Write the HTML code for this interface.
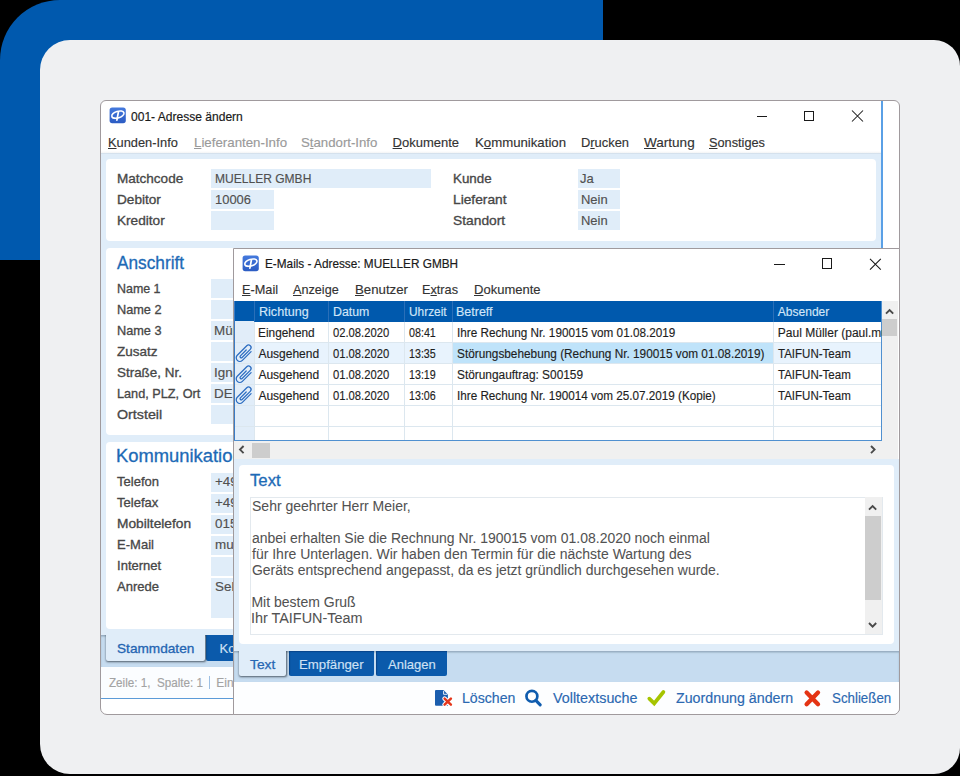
<!DOCTYPE html>
<html><head><meta charset="utf-8"><style>
html,body{margin:0;padding:0;}
body{width:960px;height:776px;overflow:hidden;position:relative;background:#000;font-family:'Liberation Sans', sans-serif;}
u{text-decoration:underline;text-decoration-thickness:1px;text-underline-offset:1px;}

</style></head><body>
<div style="position:absolute;left:0px;top:0px;width:603px;height:260px;background:#0059ae;border-top-left-radius:60px;"></div>
<div style="position:absolute;left:40px;top:40px;width:920px;height:734px;background:#eff0f2;border-radius:30px 26px 26px 30px;"></div>
<div style="position:absolute;left:100px;top:100px;width:800px;height:615px;background:#ffffff;box-sizing:border-box;border:1px solid #a09a9d;border-radius:6px 6px 7px 7px;"></div>
<svg style="position:absolute;left:109px;top:107px" width="17" height="17" viewBox="0 0 17 17">
<defs><linearGradient id="gi109" x1="0" y1="0" x2="0" y2="1"><stop offset="0" stop-color="#4479dd"/><stop offset="1" stop-color="#2c5cc3"/></linearGradient></defs>
<rect x="0.6" y="0.4" width="16.2" height="15.8" rx="2.6" fill="url(#gi109)"/>
<ellipse cx="8.9" cy="7.6" rx="6.3" ry="3.3" transform="rotate(-17 8.9 7.6)" fill="none" stroke="#fff" stroke-width="1.55"/>
<path d="M9.4 5.0 L7.9 13.2" stroke="#fff" stroke-width="1.7" fill="none" stroke-linecap="round"/>
<path d="M2.6 10.6 Q5 12 8.2 11.6" stroke="#fff" stroke-width="1" fill="none" opacity="0.8"/>
</svg>
<div class="tx" style="position:absolute;left:130.92px;top:109.81px;font-size:13.4px;line-height:13.4px;font-weight:normal;color:#1a1a1a;white-space:pre;transform-origin:0 0;transform:scaleX(0.8992);-webkit-text-stroke:0.2px #1a1a1a;">001- Adresse ändern</div>
<div style="position:absolute;left:756.5px;top:115.5px;width:10.5px;height:1px;background:#1a1a1a;"></div>
<div style="position:absolute;left:804px;top:110.5px;width:10px;height:10.5px;background:transparent;box-sizing:border-box;border:1px solid #1a1a1a;"></div>
<svg style="position:absolute;left:851px;top:110px" width="13" height="13" viewBox="0 0 13 13"><path d="M1 0.5 L12 11.5 M12 0.5 L1 11.5" stroke="#1a1a1a" stroke-width="1.05"/></svg>
<div class="tx" style="position:absolute;left:107.98px;top:135.65px;font-size:13px;line-height:13px;font-weight:normal;color:#333;white-space:pre;transform-origin:0 0;transform:scaleX(0.9860);-webkit-text-stroke:0.15px #333;"><u>K</u>unden-Info</div>
<div class="tx" style="position:absolute;left:193.70px;top:135.65px;font-size:13px;line-height:13px;font-weight:normal;color:#9a9a9a;white-space:pre;transform-origin:0 0;transform:scaleX(1.0220);-webkit-text-stroke:0.15px #9a9a9a;"><u>L</u>ieferanten-Info</div>
<div class="tx" style="position:absolute;left:300.68px;top:135.65px;font-size:13px;line-height:13px;font-weight:normal;color:#9a9a9a;white-space:pre;transform-origin:0 0;transform:scaleX(1.0162);-webkit-text-stroke:0.15px #9a9a9a;">S<u>t</u>andort-Info</div>
<div class="tx" style="position:absolute;left:392.59px;top:135.65px;font-size:13px;line-height:13px;font-weight:normal;color:#333;white-space:pre;transform-origin:0 0;-webkit-text-stroke:0.15px #333;"><u>D</u>okumente</div>
<div class="tx" style="position:absolute;left:475.09px;top:135.65px;font-size:13px;line-height:13px;font-weight:normal;color:#333;white-space:pre;transform-origin:0 0;transform:scaleX(1.0156);-webkit-text-stroke:0.15px #333;">K<u>o</u>mmunikation</div>
<div class="tx" style="position:absolute;left:581.09px;top:135.65px;font-size:13px;line-height:13px;font-weight:normal;color:#333;white-space:pre;transform-origin:0 0;transform:scaleX(0.9919);-webkit-text-stroke:0.15px #333;">D<u>r</u>ucken</div>
<div class="tx" style="position:absolute;left:643.99px;top:135.65px;font-size:13px;line-height:13px;font-weight:normal;color:#333;white-space:pre;transform-origin:0 0;transform:scaleX(1.0412);-webkit-text-stroke:0.15px #333;"><u>W</u>artung</div>
<div class="tx" style="position:absolute;left:708.98px;top:135.65px;font-size:13px;line-height:13px;font-weight:normal;color:#333;white-space:pre;transform-origin:0 0;transform:scaleX(0.9794);-webkit-text-stroke:0.15px #333;"><u>S</u>onstiges</div>
<div style="position:absolute;left:101px;top:153px;width:780px;height:482px;background:#e0edf9;"></div>
<div style="position:absolute;left:101px;top:151px;width:780px;height:2.5px;background:linear-gradient(rgba(255,255,255,0), rgba(150,160,170,0.18));"></div>
<div style="position:absolute;left:881px;top:101px;width:1.5px;height:613px;background:#5aa0e6;"></div>
<div style="position:absolute;left:106px;top:158.6px;width:770px;height:82.4px;background:#ffffff;border-radius:4px;"></div>
<div class="tx" style="position:absolute;left:117.09px;top:171.95px;font-size:13px;line-height:13px;font-weight:normal;color:#474747;white-space:pre;transform-origin:0 0;transform:scaleX(1.0406);-webkit-text-stroke:0.32px #474747;">Matchcode</div>
<div class="tx" style="position:absolute;left:117.09px;top:192.95px;font-size:13px;line-height:13px;font-weight:normal;color:#474747;white-space:pre;transform-origin:0 0;transform:scaleX(1.0466);-webkit-text-stroke:0.32px #474747;">Debitor</div>
<div class="tx" style="position:absolute;left:117.09px;top:213.95px;font-size:13px;line-height:13px;font-weight:normal;color:#474747;white-space:pre;transform-origin:0 0;transform:scaleX(1.0479);-webkit-text-stroke:0.32px #474747;">Kreditor</div>
<div style="position:absolute;left:211px;top:169px;width:220px;height:19px;background:#e0edf9;"></div>
<div style="position:absolute;left:211px;top:190px;width:63px;height:19px;background:#e0edf9;"></div>
<div style="position:absolute;left:211px;top:211px;width:63px;height:19px;background:#e0edf9;"></div>
<div class="tx" style="position:absolute;left:214.91px;top:171.95px;font-size:13px;line-height:13px;font-weight:normal;color:#505050;white-space:pre;transform-origin:0 0;transform:scaleX(0.9263);-webkit-text-stroke:0.15px #505050;">MUELLER GMBH</div>
<div class="tx" style="position:absolute;left:214.90px;top:192.95px;font-size:13px;line-height:13px;font-weight:normal;color:#505050;white-space:pre;transform-origin:0 0;transform:scaleX(0.9946);-webkit-text-stroke:0.15px #505050;">10006</div>
<div class="tx" style="position:absolute;left:452.57px;top:171.95px;font-size:13px;line-height:13px;font-weight:normal;color:#474747;white-space:pre;transform-origin:0 0;transform:scaleX(1.0272);-webkit-text-stroke:0.32px #474747;">Kunde</div>
<div style="position:absolute;left:577.5px;top:169px;width:42px;height:19px;background:#e0edf9;"></div>
<div class="tx" style="position:absolute;left:452.56px;top:192.95px;font-size:13px;line-height:13px;font-weight:normal;color:#474747;white-space:pre;transform-origin:0 0;transform:scaleX(1.0589);-webkit-text-stroke:0.32px #474747;">Lieferant</div>
<div style="position:absolute;left:577.5px;top:190px;width:42px;height:19px;background:#e0edf9;"></div>
<div class="tx" style="position:absolute;left:452.56px;top:213.95px;font-size:13px;line-height:13px;font-weight:normal;color:#474747;white-space:pre;transform-origin:0 0;transform:scaleX(1.0613);-webkit-text-stroke:0.32px #474747;">Standort</div>
<div style="position:absolute;left:577.5px;top:211px;width:42px;height:19px;background:#e0edf9;"></div>
<div class="tx" style="position:absolute;left:579.89px;top:171.95px;font-size:13px;line-height:13px;font-weight:normal;color:#505050;white-space:pre;transform-origin:0 0;-webkit-text-stroke:0.15px #505050;">Ja</div>
<div class="tx" style="position:absolute;left:580.99px;top:192.95px;font-size:13px;line-height:13px;font-weight:normal;color:#505050;white-space:pre;transform-origin:0 0;-webkit-text-stroke:0.15px #505050;">Nein</div>
<div class="tx" style="position:absolute;left:580.99px;top:213.95px;font-size:13px;line-height:13px;font-weight:normal;color:#505050;white-space:pre;transform-origin:0 0;-webkit-text-stroke:0.15px #505050;">Nein</div>
<div style="position:absolute;left:106px;top:248px;width:770px;height:187px;background:#ffffff;border-radius:4px;"></div>
<div class="tx" style="position:absolute;left:116.87px;top:255.12px;font-size:17.5px;line-height:17.5px;font-weight:normal;color:#1d6ab6;white-space:pre;transform-origin:0 0;transform:scaleX(0.9855);-webkit-text-stroke:0.3px #1d6ab6;">Anschrift</div>
<div class="tx" style="position:absolute;left:117.09px;top:281.95px;font-size:13px;line-height:13px;font-weight:normal;color:#474747;white-space:pre;transform-origin:0 0;transform:scaleX(0.9565);-webkit-text-stroke:0.32px #474747;">Name 1</div>
<div style="position:absolute;left:211px;top:279px;width:220px;height:19px;background:#e0edf9;"></div>
<div class="tx" style="position:absolute;left:117.09px;top:302.95px;font-size:13px;line-height:13px;font-weight:normal;color:#474747;white-space:pre;transform-origin:0 0;transform:scaleX(0.9784);-webkit-text-stroke:0.32px #474747;">Name 2</div>
<div style="position:absolute;left:211px;top:300px;width:220px;height:19px;background:#e0edf9;"></div>
<div class="tx" style="position:absolute;left:117.09px;top:323.95px;font-size:13px;line-height:13px;font-weight:normal;color:#474747;white-space:pre;transform-origin:0 0;transform:scaleX(0.9784);-webkit-text-stroke:0.32px #474747;">Name 3</div>
<div style="position:absolute;left:211px;top:321px;width:220px;height:19px;background:#e0edf9;"></div>
<div class="tx" style="position:absolute;left:117.09px;top:344.95px;font-size:13px;line-height:13px;font-weight:normal;color:#474747;white-space:pre;transform-origin:0 0;transform:scaleX(1.0359);-webkit-text-stroke:0.32px #474747;">Zusatz</div>
<div style="position:absolute;left:211px;top:342px;width:220px;height:19px;background:#e0edf9;"></div>
<div class="tx" style="position:absolute;left:117.09px;top:365.95px;font-size:13px;line-height:13px;font-weight:normal;color:#474747;white-space:pre;transform-origin:0 0;transform:scaleX(1.0323);-webkit-text-stroke:0.32px #474747;">Straße, Nr.</div>
<div style="position:absolute;left:211px;top:363px;width:220px;height:19px;background:#e0edf9;"></div>
<div class="tx" style="position:absolute;left:117.09px;top:386.95px;font-size:13px;line-height:13px;font-weight:normal;color:#474747;white-space:pre;transform-origin:0 0;transform:scaleX(0.9767);-webkit-text-stroke:0.32px #474747;">Land, PLZ, Ort</div>
<div style="position:absolute;left:211px;top:384px;width:220px;height:19px;background:#e0edf9;"></div>
<div class="tx" style="position:absolute;left:117.10px;top:407.95px;font-size:13px;line-height:13px;font-weight:normal;color:#474747;white-space:pre;transform-origin:0 0;transform:scaleX(1.0977);-webkit-text-stroke:0.32px #474747;">Ortsteil</div>
<div style="position:absolute;left:211px;top:405px;width:220px;height:19px;background:#e0edf9;"></div>
<div class="tx" style="position:absolute;left:213.59px;top:323.95px;font-size:13px;line-height:13px;font-weight:normal;color:#505050;white-space:pre;transform-origin:0 0;transform:scaleX(1.0300);-webkit-text-stroke:0.15px #505050;">Müller</div>
<div class="tx" style="position:absolute;left:213.59px;top:365.95px;font-size:13px;line-height:13px;font-weight:normal;color:#505050;white-space:pre;transform-origin:0 0;transform:scaleX(1.0300);-webkit-text-stroke:0.15px #505050;">Ignaz-Str. 1</div>
<div class="tx" style="position:absolute;left:213.59px;top:386.95px;font-size:13px;line-height:13px;font-weight:normal;color:#505050;white-space:pre;transform-origin:0 0;transform:scaleX(1.0300);-webkit-text-stroke:0.15px #505050;">DE</div>
<div style="position:absolute;left:106px;top:442px;width:770px;height:187px;background:#ffffff;border-radius:4px;"></div>
<div class="tx" style="position:absolute;left:116.28px;top:448.43px;font-size:17.5px;line-height:17.5px;font-weight:normal;color:#1d6ab6;white-space:pre;transform-origin:0 0;transform:scaleX(1.0500);-webkit-text-stroke:0.3px #1d6ab6;">Kommunikation</div>
<div class="tx" style="position:absolute;left:117.09px;top:474.95px;font-size:13px;line-height:13px;font-weight:normal;color:#474747;white-space:pre;transform-origin:0 0;-webkit-text-stroke:0.32px #474747;">Telefon</div>
<div style="position:absolute;left:211px;top:473px;width:220px;height:19px;background:#e0edf9;"></div>
<div class="tx" style="position:absolute;left:117.09px;top:495.95px;font-size:13px;line-height:13px;font-weight:normal;color:#474747;white-space:pre;transform-origin:0 0;-webkit-text-stroke:0.32px #474747;">Telefax</div>
<div style="position:absolute;left:211px;top:494px;width:220px;height:19px;background:#e0edf9;"></div>
<div class="tx" style="position:absolute;left:117.10px;top:516.95px;font-size:13px;line-height:13px;font-weight:normal;color:#474747;white-space:pre;transform-origin:0 0;transform:scaleX(1.0571);-webkit-text-stroke:0.32px #474747;">Mobiltelefon</div>
<div style="position:absolute;left:211px;top:515px;width:220px;height:19px;background:#e0edf9;"></div>
<div class="tx" style="position:absolute;left:117.09px;top:537.95px;font-size:13px;line-height:13px;font-weight:normal;color:#474747;white-space:pre;transform-origin:0 0;-webkit-text-stroke:0.32px #474747;">E-Mail</div>
<div style="position:absolute;left:211px;top:536px;width:220px;height:19px;background:#e0edf9;"></div>
<div class="tx" style="position:absolute;left:117.09px;top:558.95px;font-size:13px;line-height:13px;font-weight:normal;color:#474747;white-space:pre;transform-origin:0 0;-webkit-text-stroke:0.32px #474747;">Internet</div>
<div style="position:absolute;left:211px;top:557px;width:220px;height:19px;background:#e0edf9;"></div>
<div class="tx" style="position:absolute;left:117.09px;top:579.95px;font-size:13px;line-height:13px;font-weight:normal;color:#474747;white-space:pre;transform-origin:0 0;-webkit-text-stroke:0.32px #474747;">Anrede</div>
<div style="position:absolute;left:211px;top:578px;width:220px;height:40px;background:#e0edf9;"></div>
<div class="tx" style="position:absolute;left:214.59px;top:474.95px;font-size:13px;line-height:13px;font-weight:normal;color:#505050;white-space:pre;transform-origin:0 0;transform:scaleX(1.0300);-webkit-text-stroke:0.15px #505050;">+49 1234 5678</div>
<div class="tx" style="position:absolute;left:214.59px;top:495.95px;font-size:13px;line-height:13px;font-weight:normal;color:#505050;white-space:pre;transform-origin:0 0;transform:scaleX(1.0300);-webkit-text-stroke:0.15px #505050;">+49 1234 5679</div>
<div class="tx" style="position:absolute;left:214.59px;top:516.95px;font-size:13px;line-height:13px;font-weight:normal;color:#505050;white-space:pre;transform-origin:0 0;transform:scaleX(1.0300);-webkit-text-stroke:0.15px #505050;">0151 2345</div>
<div class="tx" style="position:absolute;left:214.59px;top:537.95px;font-size:13px;line-height:13px;font-weight:normal;color:#505050;white-space:pre;transform-origin:0 0;transform:scaleX(1.0300);-webkit-text-stroke:0.15px #505050;">mueller@mail.de</div>
<div class="tx" style="position:absolute;left:214.59px;top:579.95px;font-size:13px;line-height:13px;font-weight:normal;color:#505050;white-space:pre;transform-origin:0 0;transform:scaleX(1.0300);-webkit-text-stroke:0.15px #505050;">Sehr geehrter</div>
<div style="position:absolute;left:101px;top:635px;width:780px;height:32px;background:#c6dcf0;box-shadow:inset 0 1.5px 1.5px rgba(60,80,100,0.35);"></div>
<div style="position:absolute;left:101px;top:629px;width:780px;height:6px;background:#e0edf9;"></div>
<div style="position:absolute;left:206.3px;top:635px;width:120px;height:25.5px;background:#0b5aab;border-radius:0 0 2px 2px;"></div>
<div class="tx" style="position:absolute;left:219.49px;top:641.85px;font-size:13px;line-height:13px;font-weight:normal;color:#cfe1f4;white-space:pre;transform-origin:0 0;-webkit-text-stroke:0.15px #cfe1f4;">Kommunikation</div>
<div style="position:absolute;left:106px;top:629px;width:99px;height:31.5px;background:#e0edf9;box-shadow:0.2px 1px 2.2px rgba(30,40,50,0.72);border-radius:0 0 2px 2px;clip-path:inset(6px -6px -6px -6px);"></div>
<div class="tx" style="position:absolute;left:117.09px;top:641.85px;font-size:13px;line-height:13px;font-weight:normal;color:#2465b2;white-space:pre;transform-origin:0 0;transform:scaleX(1.0487);-webkit-text-stroke:0.3px #2465b2;">Stammdaten</div>
<div style="position:absolute;left:101px;top:667px;width:780px;height:31px;background:#fbfdff;"></div>
<div class="tx" style="position:absolute;left:109.34px;top:676.50px;font-size:12px;line-height:12px;font-weight:normal;color:#a3a3a3;white-space:pre;transform-origin:0 0;transform:scaleX(0.9712);-webkit-text-stroke:0.15px #a3a3a3;">Zeile: 1,  Spalte: 1</div>
<div style="position:absolute;left:209.2px;top:676px;width:1px;height:13px;background:#9cbfe3;"></div>
<div class="tx" style="position:absolute;left:216.26px;top:676.50px;font-size:12px;line-height:12px;font-weight:normal;color:#a3a3a3;white-space:pre;transform-origin:0 0;-webkit-text-stroke:0.15px #a3a3a3;">Einfügen</div>
<div style="position:absolute;left:101px;top:698px;width:780px;height:1.2px;background:#5b9bd8;"></div>
<div style="position:absolute;left:233px;top:248px;width:667px;height:467px;background:#ffffff;box-sizing:border-box;border:1px solid #a09a9d;border-radius:0 0 7px 0;"></div>
<svg style="position:absolute;left:242px;top:255px" width="17" height="17" viewBox="0 0 17 17">
<defs><linearGradient id="gi242" x1="0" y1="0" x2="0" y2="1"><stop offset="0" stop-color="#4479dd"/><stop offset="1" stop-color="#2c5cc3"/></linearGradient></defs>
<rect x="0.6" y="0.4" width="16.2" height="15.8" rx="2.6" fill="url(#gi242)"/>
<ellipse cx="8.9" cy="7.6" rx="6.3" ry="3.3" transform="rotate(-17 8.9 7.6)" fill="none" stroke="#fff" stroke-width="1.55"/>
<path d="M9.4 5.0 L7.9 13.2" stroke="#fff" stroke-width="1.7" fill="none" stroke-linecap="round"/>
<path d="M2.6 10.6 Q5 12 8.2 11.6" stroke="#fff" stroke-width="1" fill="none" opacity="0.8"/>
</svg>
<div class="tx" style="position:absolute;left:264.61px;top:257.41px;font-size:13.4px;line-height:13.4px;font-weight:normal;color:#1a1a1a;white-space:pre;transform-origin:0 0;transform:scaleX(0.8795);-webkit-text-stroke:0.2px #1a1a1a;">E-Mails - Adresse: MUELLER GMBH</div>
<div style="position:absolute;left:774px;top:263.5px;width:11px;height:1px;background:#1a1a1a;"></div>
<div style="position:absolute;left:821.5px;top:258px;width:10.5px;height:10.5px;background:transparent;box-sizing:border-box;border:1px solid #1a1a1a;"></div>
<svg style="position:absolute;left:869px;top:257.5px" width="13" height="13" viewBox="0 0 13 13"><path d="M1 0.8 L11.8 11.6 M11.8 0.8 L1 11.6" stroke="#1a1a1a" stroke-width="1.05"/></svg>
<div class="tx" style="position:absolute;left:241.50px;top:283.44px;font-size:13.6px;line-height:13.6px;font-weight:normal;color:#333;white-space:pre;transform-origin:0 0;transform:scaleX(0.9363);-webkit-text-stroke:0.15px #333;"><u>E</u>-Mail</div>
<div class="tx" style="position:absolute;left:293.24px;top:283.44px;font-size:13.6px;line-height:13.6px;font-weight:normal;color:#333;white-space:pre;transform-origin:0 0;transform:scaleX(0.9300);-webkit-text-stroke:0.15px #333;"><u>A</u>nzeige</div>
<div class="tx" style="position:absolute;left:354.53px;top:283.44px;font-size:13.6px;line-height:13.6px;font-weight:normal;color:#333;white-space:pre;transform-origin:0 0;transform:scaleX(0.9729);-webkit-text-stroke:0.15px #333;"><u>B</u>enutzer</div>
<div class="tx" style="position:absolute;left:422.31px;top:283.44px;font-size:13.6px;line-height:13.6px;font-weight:normal;color:#333;white-space:pre;transform-origin:0 0;transform:scaleX(0.9343);-webkit-text-stroke:0.15px #333;">E<u>x</u>tras</div>
<div class="tx" style="position:absolute;left:473.79px;top:283.44px;font-size:13.6px;line-height:13.6px;font-weight:normal;color:#333;white-space:pre;transform-origin:0 0;transform:scaleX(0.9571);-webkit-text-stroke:0.15px #333;"><u>D</u>okumente</div>
<div style="position:absolute;left:234px;top:301px;width:647px;height:140px;background:#ffffff;"></div>
<div style="position:absolute;left:234px;top:301px;width:647px;height:20.5px;background:#0059ad;"></div>
<div style="position:absolute;left:235px;top:321px;width:19.2px;height:119.5px;background:#e1edf9;"></div>
<div style="position:absolute;left:254.2px;top:342.4px;width:626.8px;height:21px;background:#e8f3fd;"></div>
<div style="position:absolute;left:453.2px;top:342.4px;width:319.6px;height:21px;background:#bfe3fa;"></div>
<div style="position:absolute;left:235px;top:342px;width:646px;height:1px;background:#dce7ef;"></div>
<div style="position:absolute;left:235px;top:363px;width:646px;height:1px;background:#dce7ef;"></div>
<div style="position:absolute;left:235px;top:384px;width:646px;height:1px;background:#dce7ef;"></div>
<div style="position:absolute;left:235px;top:405px;width:646px;height:1px;background:#dce7ef;"></div>
<div style="position:absolute;left:235px;top:426px;width:646px;height:1px;background:#dce7ef;"></div>
<div style="position:absolute;left:254.2px;top:321.5px;width:1px;height:119px;background:#dce7ef;"></div>
<div style="position:absolute;left:254.2px;top:301px;width:1px;height:20.5px;background:#2a6fb8;"></div>
<div style="position:absolute;left:328.2px;top:321.5px;width:1px;height:119px;background:#dce7ef;"></div>
<div style="position:absolute;left:328.2px;top:301px;width:1px;height:20.5px;background:#2a6fb8;"></div>
<div style="position:absolute;left:404.2px;top:321.5px;width:1px;height:119px;background:#dce7ef;"></div>
<div style="position:absolute;left:404.2px;top:301px;width:1px;height:20.5px;background:#2a6fb8;"></div>
<div style="position:absolute;left:452.4px;top:321.5px;width:1px;height:119px;background:#dce7ef;"></div>
<div style="position:absolute;left:452.4px;top:301px;width:1px;height:20.5px;background:#2a6fb8;"></div>
<div style="position:absolute;left:772.8px;top:321.5px;width:1px;height:119px;background:#dce7ef;"></div>
<div style="position:absolute;left:772.8px;top:301px;width:1px;height:20.5px;background:#2a6fb8;"></div>
<div style="position:absolute;left:234px;top:301px;width:1.2px;height:140px;background:#3a7cc6;"></div>
<div style="position:absolute;left:234px;top:439.8px;width:647px;height:1.2px;background:#5090d0;"></div>
<div style="position:absolute;left:880.5px;top:301px;width:1.2px;height:140px;background:#5090d0;"></div>
<div class="tx" style="position:absolute;left:258.51px;top:305.80px;font-size:12px;line-height:12px;font-weight:normal;color:#d2e6f8;white-space:pre;transform-origin:0 0;transform:scaleX(1.0478);-webkit-text-stroke:0.15px #d2e6f8;">Richtung</div>
<div class="tx" style="position:absolute;left:332.73px;top:305.80px;font-size:12px;line-height:12px;font-weight:normal;color:#d2e6f8;white-space:pre;transform-origin:0 0;transform:scaleX(1.0288);-webkit-text-stroke:0.15px #d2e6f8;">Datum</div>
<div class="tx" style="position:absolute;left:409.06px;top:305.80px;font-size:12px;line-height:12px;font-weight:normal;color:#d2e6f8;white-space:pre;transform-origin:0 0;transform:scaleX(0.9895);-webkit-text-stroke:0.15px #d2e6f8;">Uhrzeit</div>
<div class="tx" style="position:absolute;left:456.13px;top:305.80px;font-size:12px;line-height:12px;font-weight:normal;color:#d2e6f8;white-space:pre;transform-origin:0 0;transform:scaleX(1.0400);-webkit-text-stroke:0.15px #d2e6f8;">Betreff</div>
<div class="tx" style="position:absolute;left:777.86px;top:305.80px;font-size:12px;line-height:12px;font-weight:normal;color:#d2e6f8;white-space:pre;transform-origin:0 0;-webkit-text-stroke:0.15px #d2e6f8;">Absender</div>
<div class="tx" style="position:absolute;left:258.41px;top:326.90px;font-size:12px;line-height:12px;font-weight:normal;color:#1e1e1e;white-space:pre;transform-origin:0 0;transform:scaleX(0.9877);-webkit-text-stroke:0.15px #1e1e1e;">Eingehend</div>
<div class="tx" style="position:absolute;left:332.88px;top:326.90px;font-size:12px;line-height:12px;font-weight:normal;color:#1e1e1e;white-space:pre;transform-origin:0 0;transform:scaleX(0.9345);-webkit-text-stroke:0.15px #1e1e1e;">02.08.2020</div>
<div class="tx" style="position:absolute;left:409.01px;top:326.90px;font-size:12px;line-height:12px;font-weight:normal;color:#1e1e1e;white-space:pre;transform-origin:0 0;transform:scaleX(0.8933);-webkit-text-stroke:0.15px #1e1e1e;">08:41</div>
<div class="tx" style="position:absolute;left:457.18px;top:326.90px;font-size:12px;line-height:12px;font-weight:normal;color:#1e1e1e;white-space:pre;transform-origin:0 0;transform:scaleX(0.9767);-webkit-text-stroke:0.15px #1e1e1e;">Ihre Rechung Nr. 190015 vom 01.08.2019</div>
<div class="tx" style="position:absolute;left:777.86px;top:326.90px;font-size:12px;line-height:12px;font-weight:normal;color:#1e1e1e;white-space:pre;transform-origin:0 0;-webkit-text-stroke:0.15px #1e1e1e;">Paul Müller (paul.mue</div>
<div class="tx" style="position:absolute;left:258.41px;top:347.90px;font-size:12px;line-height:12px;font-weight:normal;color:#1e1e1e;white-space:pre;transform-origin:0 0;-webkit-text-stroke:0.15px #1e1e1e;">Ausgehend</div>
<div class="tx" style="position:absolute;left:332.88px;top:347.90px;font-size:12px;line-height:12px;font-weight:normal;color:#1e1e1e;white-space:pre;transform-origin:0 0;transform:scaleX(0.9345);-webkit-text-stroke:0.15px #1e1e1e;">01.08.2020</div>
<div class="tx" style="position:absolute;left:409.11px;top:347.90px;font-size:12px;line-height:12px;font-weight:normal;color:#1e1e1e;white-space:pre;transform-origin:0 0;transform:scaleX(0.8911);-webkit-text-stroke:0.15px #1e1e1e;">13:35</div>
<div class="tx" style="position:absolute;left:457.16px;top:347.90px;font-size:12px;line-height:12px;font-weight:normal;color:#1e1e1e;white-space:pre;transform-origin:0 0;transform:scaleX(0.9846);-webkit-text-stroke:0.15px #1e1e1e;">Störungsbehebung (Rechung Nr. 190015 vom 01.08.2019)</div>
<div class="tx" style="position:absolute;left:777.86px;top:347.90px;font-size:12px;line-height:12px;font-weight:normal;color:#1e1e1e;white-space:pre;transform-origin:0 0;transform:scaleX(0.9606);-webkit-text-stroke:0.15px #1e1e1e;">TAIFUN-Team</div>
<svg style="position:absolute;left:234.4px;top:342.5px" width="20" height="21" viewBox="-10 -10.5 20 21">
<g transform="rotate(45)" fill="none" stroke="#2b6cc0" stroke-width="1.25" stroke-linecap="round">
<path d="M3.7 -6.3 L3.7 6.0 A3.6 3.6 0 0 1 -3.5 6.0 L-3.5 -7.4 A2.5 2.5 0 0 1 1.5 -7.4 L1.5 4.2 A1.2 1.2 0 0 1 -0.9 4.2 L-0.9 -4"/>
</g></svg>
<div class="tx" style="position:absolute;left:258.41px;top:368.90px;font-size:12px;line-height:12px;font-weight:normal;color:#1e1e1e;white-space:pre;transform-origin:0 0;-webkit-text-stroke:0.15px #1e1e1e;">Ausgehend</div>
<div class="tx" style="position:absolute;left:332.88px;top:368.90px;font-size:12px;line-height:12px;font-weight:normal;color:#1e1e1e;white-space:pre;transform-origin:0 0;transform:scaleX(0.9345);-webkit-text-stroke:0.15px #1e1e1e;">01.08.2020</div>
<div class="tx" style="position:absolute;left:409.11px;top:368.90px;font-size:12px;line-height:12px;font-weight:normal;color:#1e1e1e;white-space:pre;transform-origin:0 0;transform:scaleX(0.8911);-webkit-text-stroke:0.15px #1e1e1e;">13:19</div>
<div class="tx" style="position:absolute;left:457.16px;top:368.90px;font-size:12px;line-height:12px;font-weight:normal;color:#1e1e1e;white-space:pre;transform-origin:0 0;transform:scaleX(0.9891);-webkit-text-stroke:0.15px #1e1e1e;">Störungauftrag: S00159</div>
<div class="tx" style="position:absolute;left:777.86px;top:368.90px;font-size:12px;line-height:12px;font-weight:normal;color:#1e1e1e;white-space:pre;transform-origin:0 0;transform:scaleX(0.9606);-webkit-text-stroke:0.15px #1e1e1e;">TAIFUN-Team</div>
<svg style="position:absolute;left:234.4px;top:363.5px" width="20" height="21" viewBox="-10 -10.5 20 21">
<g transform="rotate(45)" fill="none" stroke="#2b6cc0" stroke-width="1.25" stroke-linecap="round">
<path d="M3.7 -6.3 L3.7 6.0 A3.6 3.6 0 0 1 -3.5 6.0 L-3.5 -7.4 A2.5 2.5 0 0 1 1.5 -7.4 L1.5 4.2 A1.2 1.2 0 0 1 -0.9 4.2 L-0.9 -4"/>
</g></svg>
<div class="tx" style="position:absolute;left:258.41px;top:389.90px;font-size:12px;line-height:12px;font-weight:normal;color:#1e1e1e;white-space:pre;transform-origin:0 0;-webkit-text-stroke:0.15px #1e1e1e;">Ausgehend</div>
<div class="tx" style="position:absolute;left:332.88px;top:389.90px;font-size:12px;line-height:12px;font-weight:normal;color:#1e1e1e;white-space:pre;transform-origin:0 0;transform:scaleX(0.9345);-webkit-text-stroke:0.15px #1e1e1e;">01.08.2020</div>
<div class="tx" style="position:absolute;left:409.11px;top:389.90px;font-size:12px;line-height:12px;font-weight:normal;color:#1e1e1e;white-space:pre;transform-origin:0 0;transform:scaleX(0.8911);-webkit-text-stroke:0.15px #1e1e1e;">13:06</div>
<div class="tx" style="position:absolute;left:457.18px;top:389.90px;font-size:12px;line-height:12px;font-weight:normal;color:#1e1e1e;white-space:pre;transform-origin:0 0;transform:scaleX(0.9743);-webkit-text-stroke:0.15px #1e1e1e;">Ihre Rechung Nr. 190014 vom 25.07.2019 (Kopie)</div>
<div class="tx" style="position:absolute;left:777.86px;top:389.90px;font-size:12px;line-height:12px;font-weight:normal;color:#1e1e1e;white-space:pre;transform-origin:0 0;transform:scaleX(0.9606);-webkit-text-stroke:0.15px #1e1e1e;">TAIFUN-Team</div>
<svg style="position:absolute;left:234.4px;top:384.5px" width="20" height="21" viewBox="-10 -10.5 20 21">
<g transform="rotate(45)" fill="none" stroke="#2b6cc0" stroke-width="1.25" stroke-linecap="round">
<path d="M3.7 -6.3 L3.7 6.0 A3.6 3.6 0 0 1 -3.5 6.0 L-3.5 -7.4 A2.5 2.5 0 0 1 1.5 -7.4 L1.5 4.2 A1.2 1.2 0 0 1 -0.9 4.2 L-0.9 -4"/>
</g></svg>
<div style="position:absolute;left:234px;top:441.3px;width:648px;height:17.7px;background:#f0f0f0;"></div>
<div style="position:absolute;left:251.5px;top:443px;width:18px;height:15px;background:#cdcdcd;"></div>
<div style="position:absolute;left:881.8px;top:301px;width:16.7px;height:158px;background:#f0f0f0;"></div>
<div style="position:absolute;left:882.3px;top:319px;width:15.2px;height:17.4px;background:#cdcdcd;"></div>
<svg style="position:absolute;left:238.2px;top:444.4px" width="7.6" height="11.2" viewBox="-2 -2 7.6 11.2"><path d="M3.6 0 L0 3.6 L3.6 7.2" fill="none" stroke="#4a4a4a" stroke-width="1.9"/></svg>
<svg style="position:absolute;left:868.7px;top:444.4px" width="7.6" height="11.2" viewBox="-2 -2 7.6 11.2"><path d="M0 0 L3.6 3.6 L0 7.2" fill="none" stroke="#4a4a4a" stroke-width="1.9"/></svg>
<svg style="position:absolute;left:884.1999999999999px;top:307.5px" width="11.2" height="7.6" viewBox="-2 -2 11.2 7.6"><path d="M0 3.6 L3.6 0 L7.2 3.6" fill="none" stroke="#4a4a4a" stroke-width="1.9"/></svg>
<div style="position:absolute;left:234px;top:459px;width:665px;height:192px;background:#e0edf9;"></div>
<div style="position:absolute;left:239px;top:465px;width:655px;height:179px;background:#ffffff;border-radius:4px;"></div>
<div class="tx" style="position:absolute;left:250.26px;top:473.45px;font-size:16px;line-height:16px;font-weight:normal;color:#1d6ab6;white-space:pre;transform-origin:0 0;transform:scaleX(1.0468);-webkit-text-stroke:0.3px #1d6ab6;">Text</div>
<div style="position:absolute;left:249.5px;top:496.5px;width:633.5px;height:138px;background:#ffffff;box-sizing:border-box;border:1px solid #e3e9ee;"></div>
<div style="position:absolute;left:864.5px;top:497.3px;width:17.5px;height:136.5px;background:#f0f0f0;"></div>
<div style="position:absolute;left:864.8px;top:516px;width:15.8px;height:84px;background:#cdcdcd;"></div>
<svg style="position:absolute;left:867.1px;top:504.0px" width="11.2" height="7.6" viewBox="-2 -2 11.2 7.6"><path d="M0 3.6 L3.6 0 L7.2 3.6" fill="none" stroke="#4a4a4a" stroke-width="1.9"/></svg>
<svg style="position:absolute;left:867.1px;top:620.8000000000001px" width="11.2" height="7.6" viewBox="-2 -2 11.2 7.6"><path d="M0 0 L3.6 3.6 L7.2 0" fill="none" stroke="#4a4a4a" stroke-width="1.9"/></svg>
<div class="tx" style="position:absolute;left:252.02px;top:499.35px;font-size:14px;line-height:14px;font-weight:normal;color:#525252;white-space:pre;transform-origin:0 0;-webkit-text-stroke:0.05px #525252;">Sehr geehrter Herr Meier,</div>
<div class="tx" style="position:absolute;left:252.02px;top:531.10px;font-size:14px;line-height:14px;font-weight:normal;color:#525252;white-space:pre;transform-origin:0 0;transform:scaleX(0.9970);-webkit-text-stroke:0.05px #525252;">anbei erhalten Sie die Rechnung Nr. 190015 vom 01.08.2020 noch einmal</div>
<div class="tx" style="position:absolute;left:252.02px;top:547.00px;font-size:14px;line-height:14px;font-weight:normal;color:#525252;white-space:pre;transform-origin:0 0;transform:scaleX(0.9995);-webkit-text-stroke:0.05px #525252;">für Ihre Unterlagen. Wir haben den Termin für die nächste Wartung des</div>
<div class="tx" style="position:absolute;left:252.02px;top:562.90px;font-size:14px;line-height:14px;font-weight:normal;color:#525252;white-space:pre;transform-origin:0 0;transform:scaleX(0.9949);-webkit-text-stroke:0.05px #525252;">Geräts entsprechend angepasst, da es jetzt gründlich durchgesehen wurde.</div>
<div class="tx" style="position:absolute;left:251.41px;top:595.10px;font-size:14px;line-height:14px;font-weight:normal;color:#525252;white-space:pre;transform-origin:0 0;-webkit-text-stroke:0.05px #525252;">Mit bestem Gruß</div>
<div class="tx" style="position:absolute;left:251.39px;top:611.10px;font-size:14px;line-height:14px;font-weight:normal;color:#525252;white-space:pre;transform-origin:0 0;transform:scaleX(1.0281);-webkit-text-stroke:0.05px #525252;">Ihr TAIFUN-Team</div>
<div style="position:absolute;left:234px;top:643.5px;width:665px;height:7.5px;background:#e0edf9;"></div>
<div style="position:absolute;left:234px;top:651px;width:665px;height:31px;background:#c6dcf0;box-shadow:inset 0 1.5px 1.5px rgba(60,80,100,0.35);"></div>
<div style="position:absolute;left:288.5px;top:651px;width:85.5px;height:24.7px;background:#0b5aab;border-radius:0 0 2px 2px;box-shadow:inset 1px 1px 1px rgba(0,30,80,0.35);"></div>
<div class="tx" style="position:absolute;left:298.58px;top:657.70px;font-size:13px;line-height:13px;font-weight:normal;color:#cfe1f4;white-space:pre;transform-origin:0 0;transform:scaleX(1.0159);-webkit-text-stroke:0.15px #cfe1f4;">Empfänger</div>
<div style="position:absolute;left:376px;top:651px;width:70.5px;height:24.7px;background:#0b5aab;border-radius:0 0 2px 2px;box-shadow:inset 1px 1px 1px rgba(0,30,80,0.35);"></div>
<div class="tx" style="position:absolute;left:387.83px;top:657.70px;font-size:13px;line-height:13px;font-weight:normal;color:#cfe1f4;white-space:pre;transform-origin:0 0;transform:scaleX(1.0001);-webkit-text-stroke:0.15px #cfe1f4;">Anlagen</div>
<div style="position:absolute;left:238.5px;top:644px;width:47.5px;height:32.3px;background:#e0edf9;box-shadow:0.2px 1px 2.2px rgba(30,40,50,0.72);border-radius:0 0 2px 2px;clip-path:inset(7px -6px -6px -6px);"></div>
<div class="tx" style="position:absolute;left:249.85px;top:657.70px;font-size:13px;line-height:13px;font-weight:normal;color:#2767b3;white-space:pre;transform-origin:0 0;transform:scaleX(1.0601);-webkit-text-stroke:0.25px #2767b3;">Text</div>
<div style="position:absolute;left:234px;top:682px;width:665px;height:32px;background:#fdfeff;border-radius:0 0 6px 0;"></div>
<svg style="position:absolute;left:430px;top:684px" width="30" height="28" viewBox="430 684 30 28">
<path d="M436 690 H443.5 L447.9 694.4 V705.7 H436 Q435 705.7 435 704.7 V691 Q435 690 436 690 Z" fill="#1b5eae"/>
<path d="M443.6 690.8 V694.3 H447.2" fill="none" stroke="#fff" stroke-width="0.9"/>
<path d="M444.6 698.6 L450.9 704.6 M450.9 698.6 L444.6 704.6" stroke="#fff" stroke-width="4.6" stroke-linecap="round"/>
<path d="M444.6 698.6 L450.9 704.6 M450.9 698.6 L444.6 704.6" stroke="#e4371c" stroke-width="2.5" stroke-linecap="round"/>
</svg>
<div class="tx" style="position:absolute;left:461.51px;top:690.60px;font-size:14px;line-height:14px;font-weight:normal;color:#2b68b1;white-space:pre;transform-origin:0 0;transform:scaleX(1.0098);-webkit-text-stroke:0.15px #2b68b1;">Löschen</div>
<svg style="position:absolute;left:518px;top:684px" width="30" height="28" viewBox="518 684 30 28">
<circle cx="531.9" cy="696.3" r="5.45" fill="none" stroke="#0f5cae" stroke-width="2.7"/>
<path d="M535.8 700.3 L540.2 704.8" stroke="#0f5cae" stroke-width="3.1" stroke-linecap="round"/>
</svg>
<div class="tx" style="position:absolute;left:552.53px;top:690.60px;font-size:14px;line-height:14px;font-weight:normal;color:#2b68b1;white-space:pre;transform-origin:0 0;transform:scaleX(1.0241);-webkit-text-stroke:0.15px #2b68b1;">Volltextsuche</div>
<svg style="position:absolute;left:640px;top:684px" width="30" height="28" viewBox="640 684 30 28">
<path d="M649.3 698.6 L654.2 703.4 L663.4 692" fill="none" stroke="#a6c400" stroke-width="3.7" stroke-linecap="round" stroke-linejoin="miter"/>
</svg>
<div class="tx" style="position:absolute;left:675.53px;top:690.60px;font-size:14px;line-height:14px;font-weight:normal;color:#2b68b1;white-space:pre;transform-origin:0 0;transform:scaleX(1.0174);-webkit-text-stroke:0.15px #2b68b1;">Zuordnung ändern</div>
<svg style="position:absolute;left:796px;top:684px" width="30" height="28" viewBox="796 684 30 28">
<path d="M806.6 692.6 L818 704.3 M818 692.6 L806.6 704.3" stroke="#e43414" stroke-width="4.3" stroke-linecap="round"/>
</svg>
<div class="tx" style="position:absolute;left:831.54px;top:690.60px;font-size:14px;line-height:14px;font-weight:normal;color:#2b68b1;white-space:pre;transform-origin:0 0;transform:scaleX(0.9509);-webkit-text-stroke:0.15px #2b68b1;">Schließen</div>
</body></html>
